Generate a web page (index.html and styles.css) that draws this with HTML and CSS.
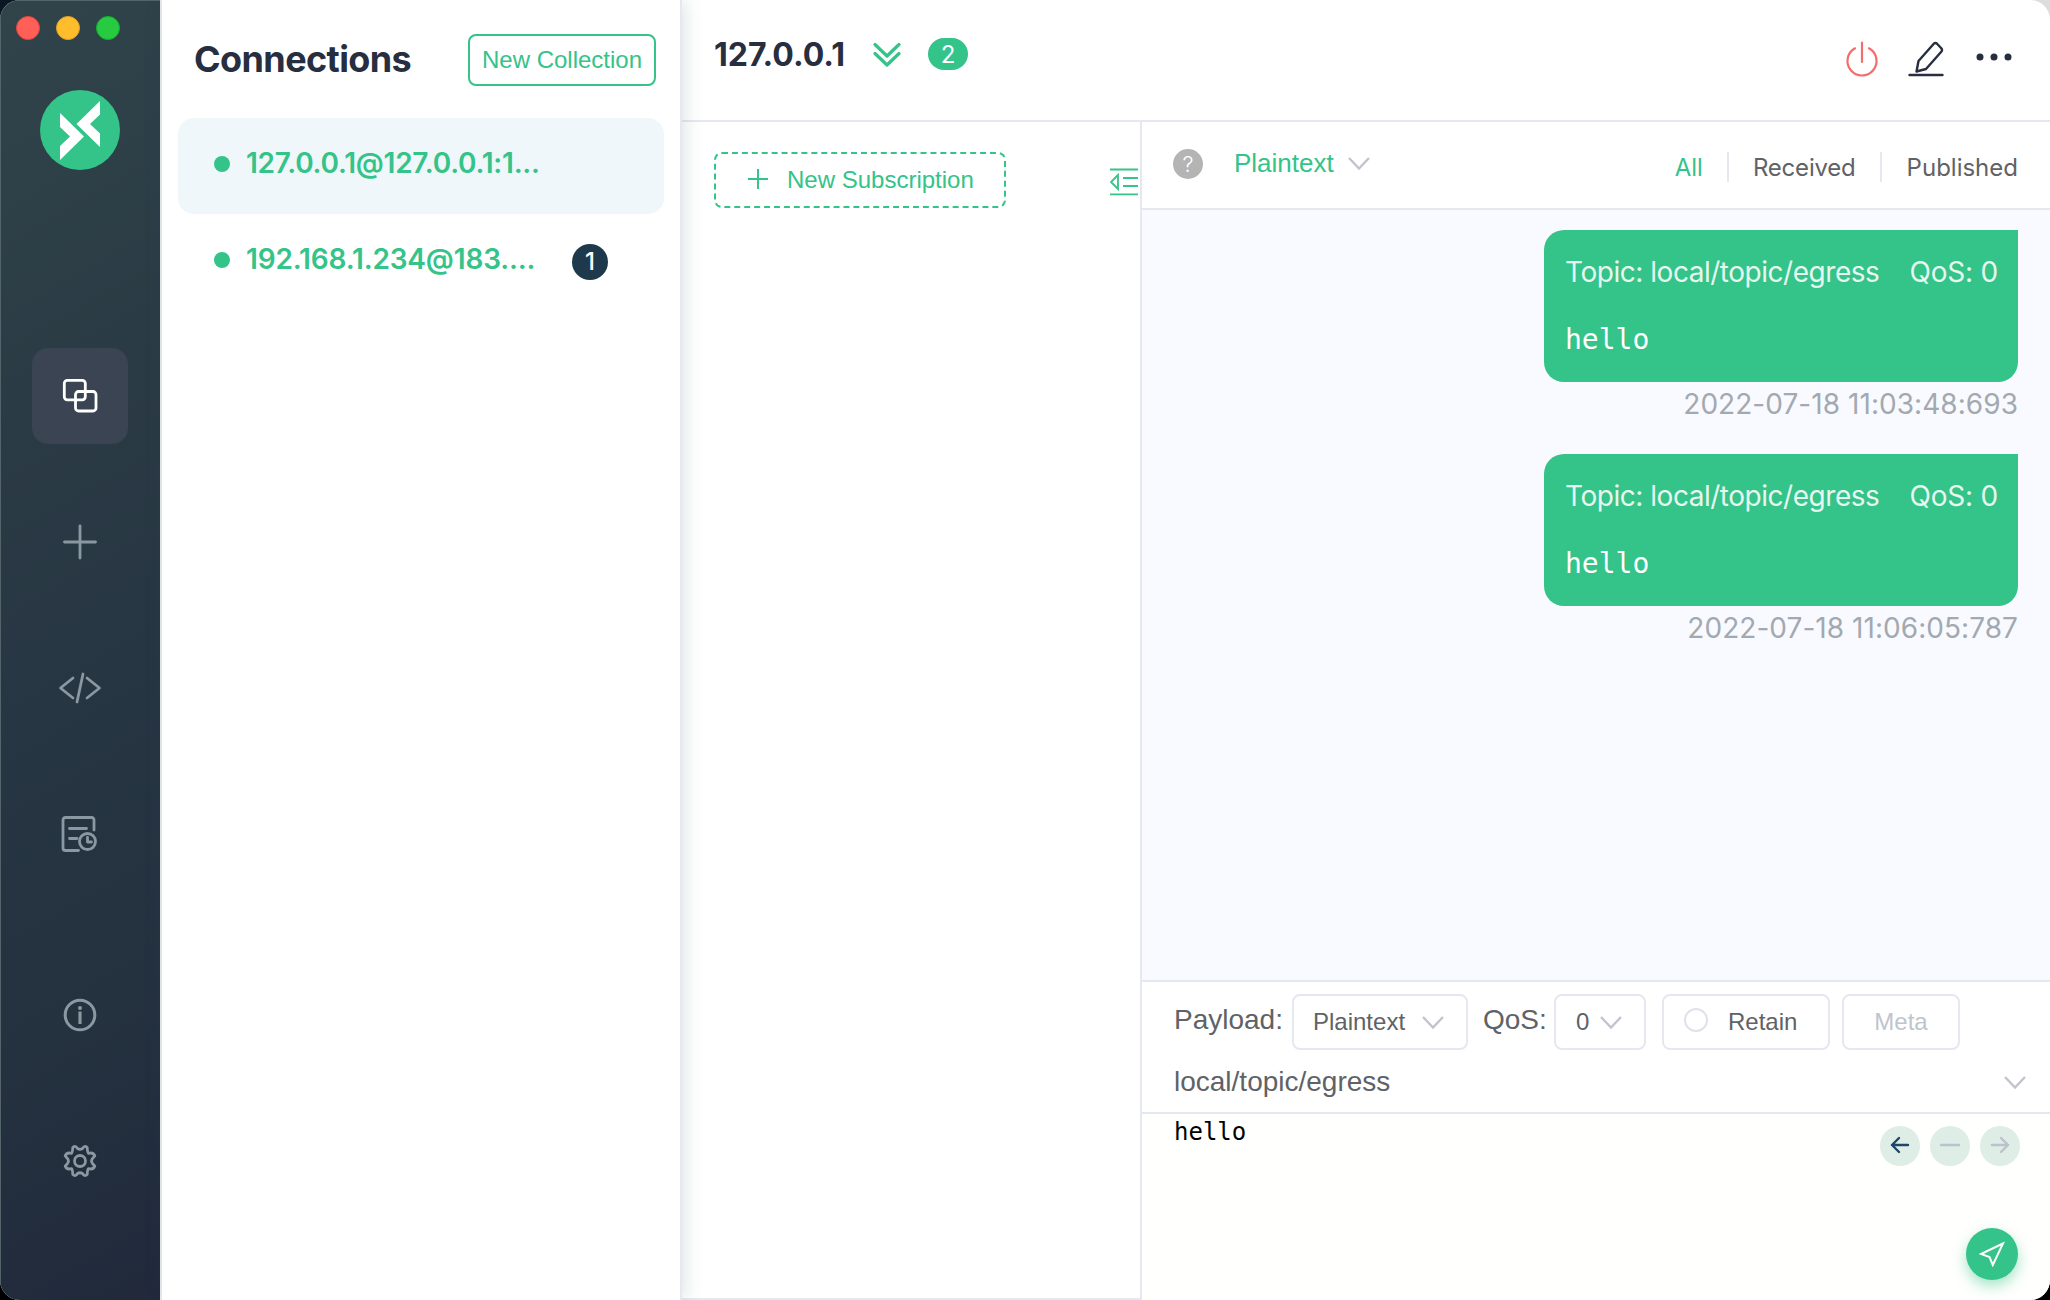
FILE: index.html
```html
<!DOCTYPE html>
<html lang="en">
<head>
<meta charset="utf-8">
<title>Connections</title>
<link rel="stylesheet" href="styles.css">
</head>
<body>
<div class="window">
  <nav class="sidebar">
    <div class="lights"><i class="light close"></i><i class="light minimise"></i><i class="light zoom"></i></div>
    <svg class="logo" viewBox="0 0 80 80"><circle cx="40" cy="40" r="40" fill="#34c388"/><path d="M20 23 44 46.500 20 70V56L30 46.500 20 37ZM60 11V24.500L50 34 60 43.500V57L36.500 34Z" fill="#fff"/></svg>
    <div class="menu">
      <a class="item active"><svg width="36" height="36" fill="none" stroke="#fff" stroke-width="2.800"><rect x="2.300" y="2.300" width="21" height="19.500" rx="3"/><rect x="13.500" y="13.500" width="20.500" height="19.500" rx="3"/></svg></a>
      <a class="item"><svg width="36" height="36" fill="none" stroke="currentColor" stroke-width="2.800" stroke-linecap="round"><path d="M2.500 18H33.500M18 2V34"/></svg></a>
      <a class="item"><svg width="44" height="36" fill="none" stroke="currentColor" stroke-width="2.800" stroke-linecap="round" stroke-linejoin="round"><path d="M15 8 2.500 18 15 28M29 8 41.500 18 29 28M25 4 19 32"/></svg></a>
      <a class="item"><svg width="38" height="38" fill="none" stroke="currentColor" stroke-width="2.800" stroke-linecap="round" stroke-linejoin="round"><path d="M33 15V5Q33 2.500 30.500 2.500H4.500Q2 2.500 2 5V33Q2 35.500 4.500 35.500H17.500M8.500 13.500H25.500M8.500 23.500H16"/><circle cx="26.500" cy="26.500" r="8"/><path d="M26.500 22.500V27H30.500"/></svg></a>
    </div>
    <div class="menu lower">
      <a class="item"><svg width="34" height="34" fill="none" stroke="currentColor"><circle cx="17" cy="17" r="14.800" stroke-width="3"/><circle cx="17" cy="10" r="2" fill="currentColor" stroke="none"/><path d="M17 13.500V26" stroke-width="3.200"/></svg></a>
      <a class="item"><svg width="34" height="34" viewBox="0 0 34 34" fill="none" stroke="currentColor" stroke-width="2.800" stroke-linejoin="round"><circle cx="17" cy="17" r="5.500"/><path d="M14.500 4.500Q12.500 1 9.800 3.500Q9.500 8.500 8.500 9.300Q3.500 8 2.200 12Q5.500 15 5.500 17Q5.500 19 2.200 22Q3.500 26 8.500 24.700Q9.500 25.500 9.800 30.500Q12.500 33 14.500 29.500Q17 28 19.500 29.500Q21.500 33 24.200 30.500Q24.500 25.500 25.500 24.700Q30.500 26 31.800 22Q28.500 19 28.500 17Q28.500 15 31.800 12Q30.500 8 25.500 9.300Q24.500 8.500 24.200 3.500Q21.500 1 19.500 4.500Q17 6 14.500 4.500Z"/></svg></a>
    </div>
  </nav>

  <aside class="connections">
    <header class="list-head"><h1>Connections</h1><button class="collection">New Collection</button></header>
    <div class="conn selected"><i class="dot"></i><span class="conn-name one">127.0.0.1@127.0.0.1:1...</span></div>
    <div class="conn"><i class="dot"></i><span class="conn-name two">192.168.1.234@183....</span><b class="unread">1</b></div>
  </aside>

  <main class="detail">
    <header class="topbar">
      <h2>127.0.0.1</h2>
      <svg class="double" width="28" height="26" fill="none" stroke="#34c388" stroke-width="3.200" stroke-linecap="round" stroke-linejoin="round"><path d="M2 2.500 14 14 26 2.500M2 11.500 14 23 26 11.500"/></svg>
      <span class="count">2</span>
      <div class="tools">
        <svg class="power" width="34" height="36" fill="none" stroke="#f56c6c" stroke-width="2.200" stroke-linecap="round"><path d="M17 1.500V21M10 7.300A14.500 14.500 0 1 0 24 7.300"/></svg>
        <svg class="edit" width="36" height="36" fill="none" stroke="#262e40" stroke-width="2.400" stroke-linecap="round" stroke-linejoin="round"><path d="M1.500 34H34.500M8.500 30.500 10.500 20 26 2.500Q27.500 1.300 28.800 2.500L33.500 7.500Q34.500 9 33.500 10.500L18 28Z"/></svg>
        <svg width="36" height="36" fill="#262e40"><circle cx="4" cy="16" r="3.500"/><circle cx="18" cy="16" r="3.500"/><circle cx="32" cy="16" r="3.500"/></svg>
      </div>
    </header>
    <div class="columns">
      <section class="subs">
        <button class="subscribe"><svg width="20" height="20" stroke="#34c388" stroke-width="2"><path d="M0 10H20M10 0V20"/></svg>New Subscription</button>
        <svg class="fold" width="28" height="28" fill="none" stroke="#34c388" stroke-width="1.800"><path d="M0 1.500H28M13 10H28M13 18H28M0 26.300H28M8 7V21L1 14Z"/></svg>
      </section>
      <section class="chat">
        <header class="filter">
          <span class="help">?</span><span class="format">Plaintext</span><svg class="chev" viewBox="0 0 22 13"><path d="M1 1 11 11.500 21 1"/></svg>
          <div class="tabs"><span class="all">All</span><i></i><span class="received">Received</span><i></i><span class="published">Published</span></div>
        </header>
        <div class="messages">
          <article><div class="bubble"><p class="meta"><span class="topic-name">Topic: local/topic/egress</span><span class="qos-val">QoS: 0</span></p><p class="body">hello</p></div><time>2022-07-18 11:03:48:693</time></article>
          <article><div class="bubble"><p class="meta"><span class="topic-name">Topic: local/topic/egress</span><span class="qos-val">QoS: 0</span></p><p class="body">hello</p></div><time>2022-07-18 11:06:05:787</time></article>
        </div>
        <div class="publish">
          <div class="options">
            <label class="payload">Payload:</label>
            <div class="box type">Plaintext<svg class="chev" viewBox="0 0 22 13"><path d="M1 1 11 11.500 21 1"/></svg></div>
            <label class="qos">QoS:</label>
            <div class="box level">0<svg class="chev" viewBox="0 0 22 13"><path d="M1 1 11 11.500 21 1"/></svg></div>
            <div class="box retain"><i class="radio"></i>Retain</div>
            <div class="box props">Meta</div>
          </div>
          <div class="topic"><span>local/topic/egress</span><svg class="chev" viewBox="0 0 22 13"><path d="M1 1 11 11.500 21 1"/></svg></div>
        </div>
        <div class="editor">
          <pre>hello</pre>
          <div class="controls">
            <div class="history">
              <span><svg width="20" height="18" stroke="#20476a"><path d="M18 9H2M9 2 2 9 9 16"/></svg></span>
              <span><svg width="20" height="18" stroke="#bcc1cb"><path d="M1 9H19"/></svg></span>
              <span><svg width="20" height="18" stroke="#bcc1cb"><path d="M2 9H18M11 2 18 9 11 16"/></svg></span>
            </div>
            <button class="send"><svg width="26" height="26" fill="none" stroke="#fff" stroke-width="2"><path d="M24 2.500 2 13 10.500 16 13.800 24Z"/></svg></button>
          </div>
        </div>
      </section>
    </div>
  </main>
</div>
</body>
</html>
```
FILE: styles.css
```css
* { box-sizing: border-box; }
body { margin: 0; width: 2050px; height: 1300px; overflow: hidden; background: linear-gradient(90deg, #0b1722 50%, #ddd 50%) top / 100% 50% no-repeat #000; font-family: Inter, sans-serif; color: #606266; }
h1, h2, p, pre { margin: 0; }
button { margin: 0; background: none; font-family: "Liberation Sans", Arial, sans-serif; color: #34c388; }
svg { display: block; flex: none; }
.window { display: flex; height: 1300px; border-radius: 20px; overflow: hidden; background: #fff; }

.sidebar { width: 162px; flex: none; display: flex; flex-direction: column; align-items: center; background: linear-gradient(150deg, #30444a 0%, #2b3b45 30%, #273643 52%, #24313f 78%, #21293b 100%); border-right: 2px solid #ebeef1; box-shadow: inset 1px 1px #53646b; }
.lights { align-self: flex-start; display: flex; gap: 16px; padding: 16px 0 0 16px; }
.light { width: 24px; height: 24px; border-radius: 50%; }
.close { background: #ff5f57; border: 1px solid #e14640; }
.minimise { background: #ffbd2e; border: 1px solid #dfa123; }
.zoom { background: #28ca41; border: 1px solid #14ae2d; }
.logo { width: 80px; height: 80px; margin-top: 50px; }
.menu { margin-top: 178px; display: flex; flex-direction: column; gap: 50px; }
.lower { margin-top: 85px; }
.item { width: 96px; height: 96px; border-radius: 16px; display: flex; align-items: center; justify-content: center; color: #8a98a1; }
.active { background: #3a4452; }

.connections { width: 520px; flex: none; border-right: 2px solid #e6e8f1; padding: 0 16px; box-shadow: 2px 0 18px rgba(40, 70, 90, .17); z-index: 1; background: #fff; }
.list-head { height: 118px; display: flex; justify-content: space-between; padding: 34px 8px 0 16px; }
h1 { font-size: 36px; line-height: 50px; font-weight: 700; color: #262e40; letter-spacing: -.6px; }
.collection { width: 188px; height: 52px; padding: 0; border: 2px solid #34c388; border-radius: 8px; font-size: 24px; }
.conn { width: 486px; height: 96px; border-radius: 16px; display: flex; align-items: center; padding: 0 56px 4px 36px; }
.selected { background: #eff7fa; }
.dot { width: 16px; height: 16px; margin: 0 16px 0 0; border-radius: 50%; background: #34c388; }
.conn-name { font-size: 28px; font-weight: 600; color: #34c388; white-space: nowrap; margin-top: -3px; }
.one { letter-spacing: -.23px; }
.two { letter-spacing: -.15px; }
.unread { margin: 4px 0 0 auto; width: 36px; height: 36px; border-radius: 50%; background: #1f394c; color: #fff; font: 500 24px/36px Inter, sans-serif; text-align: center; }

.detail { flex: 1; min-width: 0; display: flex; flex-direction: column; }
.topbar { height: 122px; flex: none; border-bottom: 2px solid #e6e8f1; display: flex; align-items: flex-start; padding: 0 38px 0 32px; }
h2 { font-size: 32px; line-height: 40px; margin-top: 35px; width: 159px; color: #262e40; white-space: nowrap; }
.double { margin-top: 42px; }
.count { margin: 38px 0 0 27px; width: 40px; height: 32px; border-radius: 16px; background: #34c388; color: #fff; font-size: 24px; line-height: 34px; text-align: center; }
.tools { margin: 41px 0 0 auto; display: flex; }
.power { margin-right: 29px; }
.edit { margin-right: 32px; }
.columns { flex: 1; display: flex; min-height: 0; }
.subs { width: 460px; flex: none; border-right: 2px solid #e6e8f1; border-bottom: 2px solid #e6e8f1; display: flex; align-items: flex-start; justify-content: space-between; padding: 30px 2px 0 32px; }
.subscribe { width: 292px; height: 56px; border: 2px dashed #34c388; border-radius: 8px; padding: 0 0 0 32px; font-size: 24px; display: flex; align-items: center; gap: 19px; }
.subscribe svg { margin-top: -2px; }
.fold { margin-top: 16px; }

.chat { flex: 1; min-width: 0; display: flex; flex-direction: column; }
.filter { height: 88px; flex: none; border-bottom: 2px solid #e6e8f1; display: flex; padding: 0 32px 0 31px; }
.help { width: 30px; height: 30px; margin-top: 27px; border-radius: 50%; background: #b4b4b4; color: #fff; font-size: 22px; font-weight: 300; line-height: 30px; text-align: center; }
.format { font: 26px/30px "Liberation Sans", Arial, sans-serif; color: #34c388; margin: 26px 0 0 31px; width: 114px; }
.chev { width: 22px; height: 13px; fill: none; stroke: #c0c4cc; stroke-width: 2.4; }
.filter .chev { margin-top: 35px; }
.tabs { margin: 30px 0 0 auto; display: flex; font-size: 24px; line-height: 31px; }
.tabs i { width: 2px; height: 30px; background: #e6e8f1; margin: 0 24px; }
.tabs .received + i { margin-right: 25px; }
.all { color: #34c388; }
.received { letter-spacing: -.2px; }
.messages { height: 770px; flex: none; background: #f9faff; padding: 20px 32px; display: flex; flex-direction: column; align-items: flex-end; }
article { height: 224px; text-align: right; }
.bubble { width: 474px; height: 152px; border-radius: 20px 0 20px 20px; background: #34c388; padding: 24px 20px 24px 21px; text-align: left; color: #fff; margin-left: auto; }
.meta { display: flex; justify-content: space-between; font-size: 28px; line-height: 36px; white-space: nowrap; color: #e5f7ef; }
.topic-name { letter-spacing: -.47px; }
.qos-val { letter-spacing: -.2px; }
.body { font: 28px/34px "DejaVu Sans Mono", monospace; margin-top: 33px; }
time { display: block; font-size: 28px; line-height: 34px; margin-top: 5px; color: #a2a9b0; white-space: nowrap; letter-spacing: .05px; }

.publish { height: 134px; flex: none; border-top: 2px solid #e6e8f1; border-bottom: 2px solid #e6e8f1; font-family: "Liberation Sans", Arial, sans-serif; }
.options { display: flex; padding: 12px 0 0 32px; height: 68px; }
.options label { font-size: 28px; line-height: 52px; white-space: nowrap; }
.payload { width: 118px; }
.qos { width: 86px; padding-left: 15px; }
.box { height: 56px; border: 2px solid #e6e8f1; border-radius: 8px; display: flex; align-items: center; font-size: 24px; }
.type { width: 176px; padding-left: 19px; gap: 17px; }
.level { width: 92px; padding-left: 20px; gap: 11px; }
.retain { width: 168px; margin-left: 16px; padding-left: 20px; gap: 20px; }
.props { width: 118px; margin-left: 12px; justify-content: center; color: #c0c4cc; }
.radio { width: 24px; height: 24px; margin-top: -4px; border: 2px solid #dfe2ea; border-radius: 50%; }
.topic { height: 62px; display: flex; justify-content: space-between; padding: 0 24px 0 32px; align-items: center; font-size: 28px; }
.topic span { margin-top: 2px; }
.topic .chev { margin-top: 3px; }
.editor { flex: 1; background: #fffffd; display: flex; justify-content: space-between; padding: 0 30px 0 32px; }
pre { font: 24px/36px "DejaVu Sans Mono", monospace; color: #000; }
.controls { display: flex; flex-direction: column; align-items: flex-end; padding-top: 12px; }
.history { display: flex; gap: 10px; }
.history span { width: 40px; height: 40px; border-radius: 50%; background: #deede6; display: flex; align-items: center; justify-content: center; padding-bottom: 2px; }
.history svg { fill: none; stroke-width: 2.4; stroke-linecap: round; stroke-linejoin: round; }
.send { width: 52px; height: 52px; margin: 62px 2px 0 0; padding: 0; border: 0; border-radius: 50%; background: #34c388; box-shadow: 0 6px 14px rgba(52, 195, 136, .45); display: flex; align-items: center; justify-content: center; }
```
